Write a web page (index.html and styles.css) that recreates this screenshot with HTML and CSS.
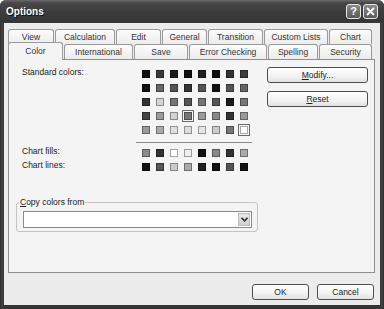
FILE: index.html
```html
<!DOCTYPE html>
<html lang="en">
<head>
    <meta charset="UTF-8">
    <title>Options</title>
    <link rel="stylesheet" href="styles.css">
</head>
<body>

    <div class="window">
        <div class="titlebar">
            <span class="title">Options</span>
            <div class="caption-btns">
                <span class="cap-btn">?</span>
                <span class="cap-btn">
                    <svg width="9" height="9" viewBox="0 0 9 9"><path d="M1 1L8 8M8 1L1 8" stroke="#fff" stroke-width="1.8"/></svg>
                </span>
            </div>
        </div>

        <div class="client">
            <!-- two rows of tabs -->
            <div class="tabrow">
                <div class="tab t-view">View</div>
                <div class="tab t-calc">Calculation</div>
                <div class="tab t-edit">Edit</div>
                <div class="tab t-general">General</div>
                <div class="tab t-transition">Transition</div>
                <div class="tab t-custom">Custom Lists</div>
                <div class="tab t-chart">Chart</div>
            </div>
            <div class="tabrow">
                <div class="tab active t-color">Color</div>
                <div class="tab t-intl">International</div>
                <div class="tab t-save">Save</div>
                <div class="tab t-error">Error Checking</div>
                <div class="tab t-spelling">Spelling</div>
                <div class="tab t-security">Security</div>
            </div>

            <div class="panel">
                <div class="chooser">
                    <div class="labels">
                        <div class="lbl">Standard colors:</div>
                        <div class="lbl lbl-fills">Chart fills:</div>
                        <div class="lbl">Chart lines:</div>
                    </div>
                    <div class="palette">
                        <div class="swatches" id="standard"></div>
                        <div class="rule"></div>
                        <div class="swatches" id="chart"></div>
                    </div>
                    <div class="actions">
                        <button class="btn"><u>M</u>odify...</button>
                        <button class="btn"><u>R</u>eset</button>
                    </div>
                </div>

                <fieldset class="copy-from">
                    <legend><u>C</u>opy colors from</legend>
                    <div class="combo">
                        <span class="combo-arrow">
                            <svg width="7" height="5" viewBox="0 0 7 5"><path d="M0.5 0.8L3.5 3.8L6.5 0.8" fill="none" stroke="#333" stroke-width="1.6"/></svg>
                        </span>
                    </div>
                </fieldset>
            </div>

            <div class="dialog-btns">
                <button class="btn">OK</button>
                <button class="btn">Cancel</button>
            </div>
        </div>
    </div>

    <script>
        var standardColors = [
            '#111', '#3a3a3a', '#1c1c1c', '#111', '#222', '#0e0e0e', '#333', '#3d3d3d',
            '#111', '#666', '#555', '#333', '#555', '#111', '#555', '#666',
            '#333', '#d4d4d4', '#777', '#555', '#777', '#555', '#1a1a1a', '#777',
            '#444', '#9a9a9a', '#d2d2d2', '#777', '#999', '#888', '#333', '#999',
            '#999', '#aaa', '#e0e0e0', '#ddd', '#e6e6e6', '#ccc', '#777', '#fff'
        ];
        var chartColors = [
            '#8a8a8a', '#333', '#fff', '#eee', '#111', '#888', '#333', '#aaa',
            '#111', '#555', '#ccc', '#aaa', '#222', '#111', '#555', '#111'
        ];
        var selected = [27, 39];

        function fillSwatches(id, colors, marked) {
            var box = document.getElementById(id);
            colors.forEach(function (c, i) {
                var cell = document.createElement('div');
                cell.className = 'cell';
                var sw = document.createElement('span');
                sw.className = marked.indexOf(i) >= 0 ? 'swatch selected' : 'swatch';
                sw.style.background = c;
                cell.appendChild(sw);
                box.appendChild(cell);
            });
        }

        fillSwatches('standard', standardColors, selected);
        fillSwatches('chart', chartColors, []);
    </script>
</body>
</html>
```

FILE: styles.css
```css
body {
    margin: 0;
    background: #fff;
    font-family: 'Liberation Sans', Arial, sans-serif;
    font-size: 8.5px;
    color: #222;
}

.window {
    width: 384px;
    height: 309px;
    box-sizing: border-box;
    display: flex;
    flex-direction: column;
    background: linear-gradient(90deg, #2a2a2a, #444 2px, #333 4px, #333 380px, #444 382px, #2a2a2a);
    border-radius: 6px 6px 0 0;
    overflow: hidden;
}

.titlebar {
    height: 23px;
    flex: none;
    display: flex;
    align-items: center;
    justify-content: space-between;
    padding: 0 6px 0 6px;
    background: linear-gradient(#6a6a6a, #474747 3px, #3c3c3c 12px, #353535);
}

.title {
    color: #fff;
    font-weight: bold;
    font-size: 10px;
    text-shadow: 1px 1px 0 #111;
}

.caption-btns {
    display: flex;
    gap: 2px;
}

.cap-btn {
    width: 13px;
    height: 13px;
    border: 1px solid #e6e6e6;
    border-radius: 3px;
    background: linear-gradient(#8a8a8a, #5a5a5a);
    color: #fff;
    font-weight: bold;
    font-size: 11px;
    line-height: 13px;
    text-align: center;
    display: flex;
    align-items: center;
    justify-content: center;
}

.client {
    flex: 1;
    margin: 0 4px 4px 4px;
    background: #ececec;
    padding: 6px 5px 0 4px;
    display: flex;
    flex-direction: column;
}

/* tabs */
.tabrow {
    display: flex;
    gap: 1px;
    height: 15px;
}

.tab {
    flex: none;
    box-sizing: border-box;
    height: 15px;
    border: 1px solid #9a9a9a;
    border-bottom: none;
    border-radius: 3px 3px 0 0;
    background: linear-gradient(#fcfcfc, #ececec);
    color: #333;
    text-align: center;
    line-height: 14px;
}

.tab.active {
    position: relative;
    z-index: 1;
    height: 18px;
    margin-top: -2px;
    background: #f4f4f4;
    line-height: 16px;
}

.t-view { width: 46px; }
.t-calc { width: 60px; }
.t-edit { width: 45px; }
.t-general { width: 45px; }
.t-transition { width: 55px; }
.t-custom { width: 64px; }
.t-chart { width: 43px; }

.t-color { width: 55px; }
.t-intl { width: 69px; }
.t-save { width: 54px; }
.t-error { width: 78px; }
.t-spelling { width: 50px; }
.t-security { width: 53px; }

/* tab page */
.panel {
    height: 214px;
    box-sizing: border-box;
    border: 1px solid #8f8f8f;
    background: #f4f4f4;
    padding: 7px 6px 0 7px;
}

.chooser {
    display: grid;
    grid-template-columns: 114px 116px 1fr;
    padding-left: 6px;
}

.lbl {
    height: 14px;
    line-height: 11px;
    color: #222;
}

.lbl-fills {
    margin-top: 65px;
}

.palette {
    display: flex;
    flex-direction: column;
}

.swatches {
    display: grid;
    grid-template-columns: repeat(8, 14px);
    grid-auto-rows: 14px;
    padding: 0 3px;
}

.cell {
    display: flex;
    align-items: center;
    justify-content: center;
}

.swatch {
    width: 8px;
    height: 8px;
    box-sizing: border-box;
    border: 1px solid rgba(0, 0, 0, 0.35);
}

.swatch.selected {
    box-shadow: 0 0 0 1px #f4f4f4, 0 0 0 2px #6a6a6a;
}

.rule {
    height: 1px;
    background: #8a8a8a;
    margin: 5px 0 3px 0;
}

.actions {
    padding-left: 15px;
    display: flex;
    flex-direction: column;
    gap: 8px;
}

.btn {
    box-sizing: border-box;
    height: 16px;
    padding: 0;
    border: 1px solid #4d4d4d;
    border-radius: 3px;
    background: linear-gradient(#ffffff, #f2f2f2 60%, #e2e2e2);
    font-family: 'Liberation Sans', Arial, sans-serif;
    font-size: 8.5px;
    color: #222;
    line-height: 14px;
}

.actions .btn {
    width: 101px;
}

/* copy colors from group */
.copy-from {
    margin: 23px 0 0 0;
    width: 242px;
    box-sizing: border-box;
    border: 1px solid #c4c4c4;
    border-radius: 3px;
    padding: 0 5px 3px 2px;
}

.copy-from legend {
    padding: 0 1px;
    line-height: 11px;
    color: #222;
}

.combo {
    height: 17px;
    margin: 3px 0 0 4px;
    box-sizing: border-box;
    border: 1px solid #8a8a8a;
    background: #fff;
    display: flex;
    justify-content: flex-end;
    padding: 1px;
}

.combo-arrow {
    width: 12px;
    background: linear-gradient(#e8e8e8, #cfcfcf);
    border: 1px solid #bdbdbd;
    box-sizing: border-box;
    display: flex;
    align-items: center;
    justify-content: center;
}

.dialog-btns {
    display: flex;
    justify-content: flex-end;
    gap: 8px;
    margin-top: 11px;
    padding-right: 1px;
}

.dialog-btns .btn {
    width: 57px;
}
```
